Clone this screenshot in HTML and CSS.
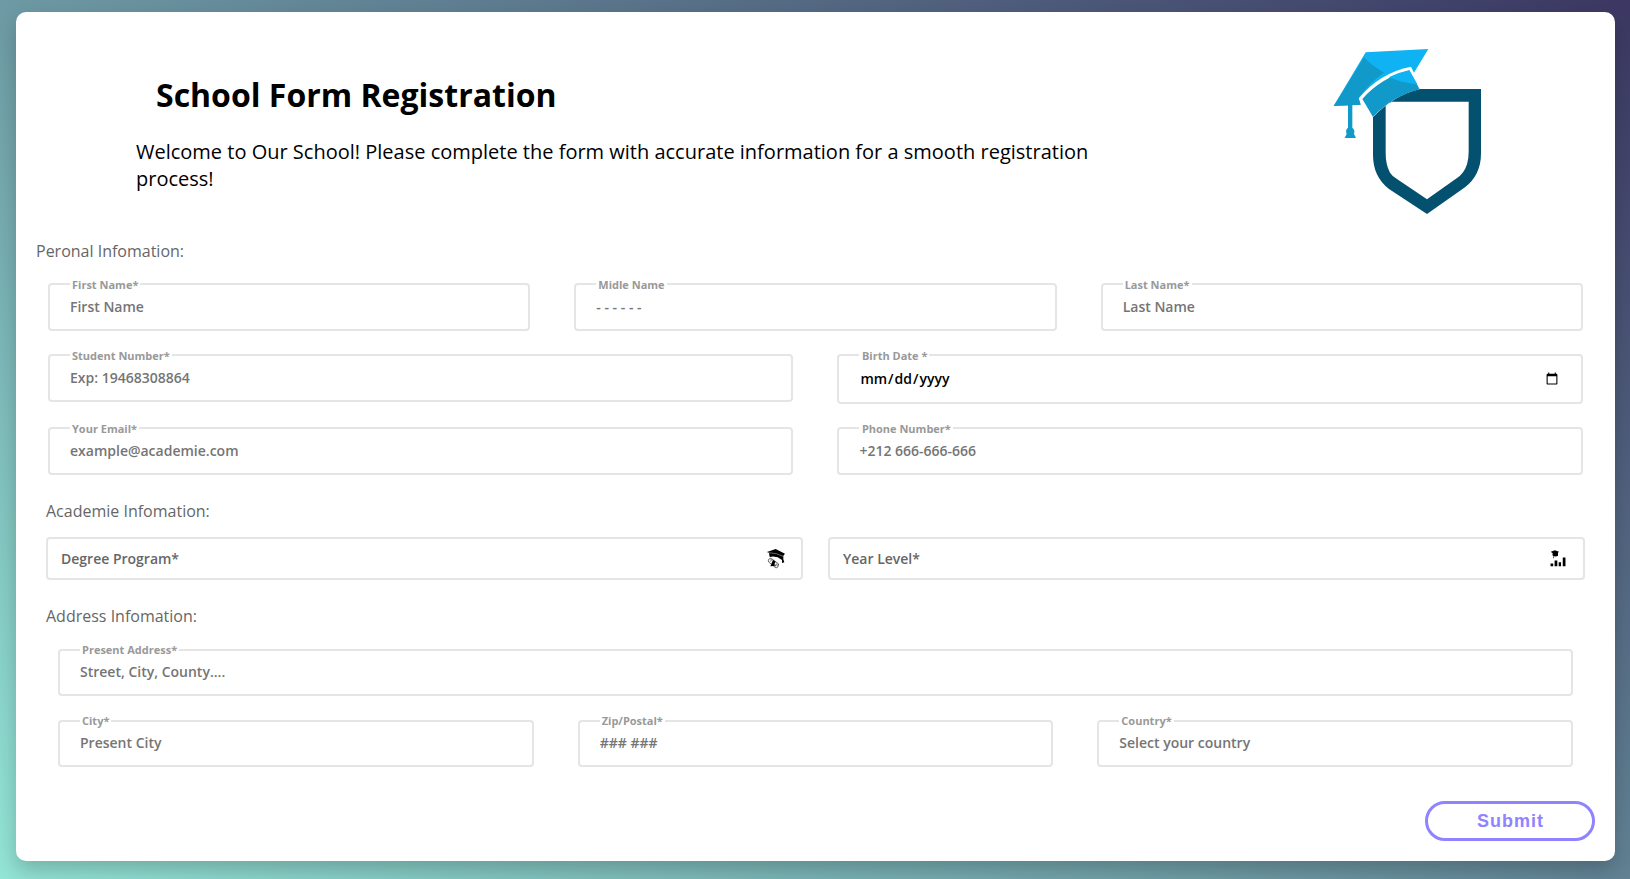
FILE: index.html
```html
<!DOCTYPE html>
<html lang="en">
<head>
<meta charset="utf-8">
<title>School Form Registration</title>
<link rel="stylesheet" href="styles.css">
</head>
<body>
<form class="card">
  <header class="header">
    <div class="intro">
      <h1 class="title">School Form Registration</h1>
      <p class="lead">Welcome to Our School! Please complete the form with accurate information for a smooth registration process!</p>
    </div>
    <svg class="logo" viewBox="0 0 600 600" aria-hidden="true">
      <path fill="#03506f" fill-rule="evenodd" d="M189 262 Q250 196 330 177 H513 V370 Q513 435 465 472 L351 552 L237 477 Q189 440 189 375 Z M227 228 Q236 218 247 215 H476 V365 Q476 405 458 428 Q452 436 440 445 L351 508 L262 448 Q246 438 240 428 Q227 405 227 370 Z"/>
      <path fill="#0fb3f3" d="M167 67 L355 57 L312 128 L303 110 Q210 128 146 205 L152 224 L71 228 Z"/>
      <path fill="#119ac9" d="M162 82 Q185 107 222 128 Q181 155 146 205 L152 224 L71 228 Z"/>
      <path fill="#119ac9" d="M157 207 Q212 144 298 121 L329 178 Q248 198 189 261 Z"/>
      <path fill="#0fb3f3" d="M236 142 Q265 127 298 121 L322 163 Q275 158 236 142 Z"/>
      <path fill="#119ac9" d="M114 224 H127 V293 Q136 300 132 312 L138 324 H104 L110 312 Q105 299 114 293 Z"/>
    </svg>
  </header>

  <section class="section personal">
    <h2 class="section-title">Peronal Infomation:</h2>
    <div class="row three">
      <div class="field"><label class="label" for="first">First Name*</label><input class="input" id="first" placeholder="First Name"></div>
      <div class="field"><label class="label" for="middle">Midle Name</label><input class="input" id="middle" placeholder="- - - - - -"></div>
      <div class="field"><label class="label" for="last">Last Name*</label><input class="input" id="last" placeholder="Last Name"></div>
    </div>
    <div class="row two">
      <div class="field"><label class="label" for="number">Student Number*</label><input class="input" id="number" placeholder="Exp: 19468308864"></div>
      <div class="field date"><label class="label" for="birth">Birth Date *</label><input class="input" id="birth" type="date"></div>
    </div>
    <div class="row two">
      <div class="field"><label class="label" for="email">Your Email*</label><input class="input" id="email" placeholder="example@academie.com"></div>
      <div class="field"><label class="label" for="phone">Phone Number*</label><input class="input" id="phone" placeholder="+212 666-666-666"></div>
    </div>
  </section>

  <section class="section academic">
    <h2 class="section-title">Academie Infomation:</h2>
    <div class="selects">
      <div class="select">
        <span>Degree Program*</span>
        <svg class="degree-icon" viewBox="0 0 54 60" aria-hidden="true">
          <path d="M0 9 L26 0 L54 14 L49 20 V31 L52 40 L45 42 L45 33 Q28 19 8 24 L6 12 Z"/>
          <path fill="none" stroke="#fff" stroke-width="1.2" d="M4 11 L28 14 L48 22"/>
          <path fill="none" stroke="#444" stroke-width="2.4" d="M5 31 Q10 25 15 30 L35 45 Q35 56 27 57 L5 39 Q3 35 5 31 Z M11 29 Q16 33 9 38 M30 43 L24 53 M35 46 L29 50"/>
          <path d="M18 32 L26 38 L22 46 L27 49 L20 51 L10 52 L14 42 Z"/>
        </svg>
      </div>
      <div class="select">
        <span>Year Level*</span>
        <svg class="level-icon" viewBox="0 0 46 50" aria-hidden="true">
          <path d="M2 5 L14 1 L26 5 L23 8 V17 Q14 21 7 16 V9 L4 7 Z M9 19 H11 V24 H9 Z"/>
          <path d="M1 40 H9 V48 H1 Z M13 31 H21 V48 H13 Z M25 36 H32 V48 H25 Z M37 22 H45 V48 H37 Z"/>
        </svg>
      </div>
    </div>
  </section>

  <section class="section address">
    <h2 class="section-title">Address Infomation:</h2>
    <div class="row one">
      <div class="field"><label class="label" for="address">Present Address*</label><input class="input" id="address" placeholder="Street, City, County...."></div>
    </div>
    <div class="row three">
      <div class="field"><label class="label" for="city">City*</label><input class="input" id="city" placeholder="Present City"></div>
      <div class="field"><label class="label" for="zip">Zip/Postal*</label><input class="input" id="zip" placeholder="### ###"></div>
      <div class="field"><label class="label" for="country">Country*</label><input class="input" id="country" placeholder="Select your country"></div>
    </div>
  </section>

  <footer class="footer"><button class="submit" type="button">Submit</button></footer>
</form>
</body>
</html>
```
FILE: styles.css
```css
* { box-sizing: border-box; margin: 0; padding: 0; }

body {
  height: 879px;
  padding: 12px 15px 18px 16px;
  overflow: hidden;
  font-family: "Open Sans", "Noto Sans", sans-serif;
  background: linear-gradient(35deg, #93e5d6, #3b3762);
}

.card {
  display: flex;
  flex-direction: column;
  height: 849px;
  background: #fff;
  border-radius: 10px;
  box-shadow: 0 10px 20px rgba(0, 0, 0, 0.2);
}

.header {
  display: flex;
  justify-content: space-between;
  height: 226px;
  padding: 18px 105px 0 120px;
}

.intro { width: 980px; padding-top: 43px; }

.title {
  margin-left: 20px;
  font-size: 32px;
  line-height: 44px;
  font-weight: 700;
}

.lead { margin-top: 21px; font-size: 20px; line-height: 27px; }

.logo { width: 200px; height: 200px; }

.section-title {
  font-size: 16px;
  font-weight: 400;
  line-height: 22px;
  color: #666;
}

.personal { height: 261px; padding: 2px 32px 0; }
.personal .section-title { margin: 0 0 21px -12px; }
.academic { height: 105px; padding: 1px 30px 0; }
.address { height: 184px; padding: 1px 42px 0; }
.address .section-title { margin: 0 0 22px -12px; }

.row {
  display: grid;
  column-gap: 44px;
  align-items: start;
  margin-bottom: 23px;
}
.one { grid-template-columns: 1fr; }
.two { grid-template-columns: 745.4px 1fr; }
.three { grid-template-columns: 1fr 1fr 1fr; }

.field {
  position: relative;
  height: 48px;
  padding: 0 20px;
  border: 2px solid #e5e5e5;
  border-radius: 4px;
}
.date { height: 50px; }
.address .field { height: 47px; }
.address .row { margin-bottom: 24px; }

.label {
  position: absolute;
  left: 20px;
  top: -8px;
  padding: 0 2px;
  font-size: 11px;
  line-height: 15px;
  font-weight: 700;
  color: #999;
  background: #fff;
}
.two .field:last-child .label { padding-left: 2.5px; }
.address .label { top: -9px; }

.input {
  display: block;
  width: 100%;
  height: 42px;
  border: 0;
  outline: 0;
  background: transparent;
  font: 600 14px/20px "Open Sans", "Noto Sans", sans-serif;
  color: #000;
}
.input::placeholder { color: #757575; }
.address .input { height: 40px; }
.date .input { height: 45px; }

.selects {
  display: grid;
  grid-template-columns: 1fr 1fr;
  column-gap: 25px;
  margin-top: 15px;
}

.select {
  display: flex;
  align-items: center;
  justify-content: space-between;
  height: 43px;
  padding: 0 16px 0 13px;
  border: 2px solid #e5e5e5;
  border-radius: 4px;
  font-size: 14px;
  font-weight: 600;
  color: #666;
}

.degree-icon { width: 18px; height: 20px; }
.level-icon { width: 16px; height: 17px; margin-right: 1px; }

.footer { display: flex; justify-content: flex-end; padding: 13px 20px 0; }

.submit {
  width: 170px;
  height: 40px;
  padding-left: 1px;
  border: 3px solid #9083ff;
  border-radius: 20px;
  background: #fff;
  font: 700 18px "Liberation Sans", Arial, sans-serif;
  letter-spacing: 1px;
  color: #9083ff;
}
```
